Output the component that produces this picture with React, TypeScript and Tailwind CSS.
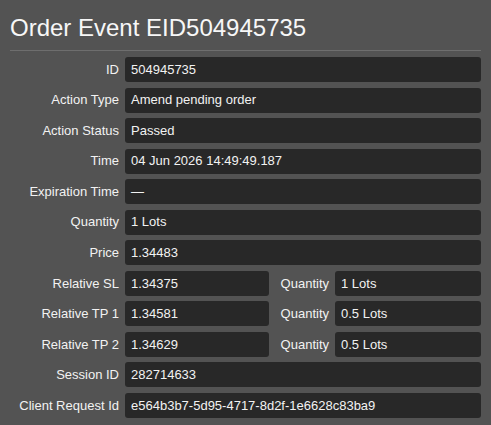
import React from "react";

const font = { fontFamily: '"Liberation Sans", Arial, sans-serif' };

function Box({ children, className = "" }: { children: React.ReactNode; className?: string }) {
  return (
    <div className={`h-[25px] rounded-[3px] bg-[#282828] pl-[6px] flex items-center text-[13px] text-[#f2f2f2] ${className}`}>
      {children}
    </div>
  );
}

function Row({ label, value }: { label: string; value: string }) {
  return (
    <div className="flex items-center gap-[6px]">
      <div className="w-[109px] shrink-0 text-right text-[13px] text-[#f2f2f2]">{label}</div>
      <Box className="flex-1">{value}</Box>
    </div>
  );
}

function SplitRow({ label, value, qty }: { label: string; value: string; qty: string }) {
  return (
    <div className="flex items-center gap-[6px]">
      <div className="w-[109px] shrink-0 text-right text-[13px] text-[#f2f2f2]">{label}</div>
      <Box className="w-[144px] shrink-0">{value}</Box>
      <div className="flex-1 text-right text-[13px] text-[#f2f2f2]">Quantity</div>
      <Box className="w-[146px] shrink-0">{qty}</Box>
    </div>
  );
}

export default function App() {
  return (
    <div className="w-[491px] h-[425px] bg-[#535353] overflow-hidden" style={font}>
      <div className="px-[10px] pt-[14px]">
        <h1 className="text-[24px] leading-[28px] font-normal text-[#f7f7f7]">Order Event EID504945735</h1>
        <div className="mt-[8px] h-px bg-[#6e6e6e]" />
        <div className="mt-[6px] flex flex-col gap-[5.55px]">
          <Row label="ID" value="504945735" />
          <Row label="Action Type" value="Amend pending order" />
          <Row label="Action Status" value="Passed" />
          <Row label="Time" value="04 Jun 2026 14:49:49.187" />
          <Row label="Expiration Time" value="—" />
          <Row label="Quantity" value="1 Lots" />
          <Row label="Price" value="1.34483" />
          <SplitRow label="Relative SL" value="1.34375" qty="1 Lots" />
          <SplitRow label="Relative TP 1" value="1.34581" qty="0.5 Lots" />
          <SplitRow label="Relative TP 2" value="1.34629" qty="0.5 Lots" />
          <Row label="Session ID" value="282714633" />
          <Row label="Client Request Id" value="e564b3b7-5d95-4717-8d2f-1e6628c83ba9" />
        </div>
      </div>
    </div>
  );
}
